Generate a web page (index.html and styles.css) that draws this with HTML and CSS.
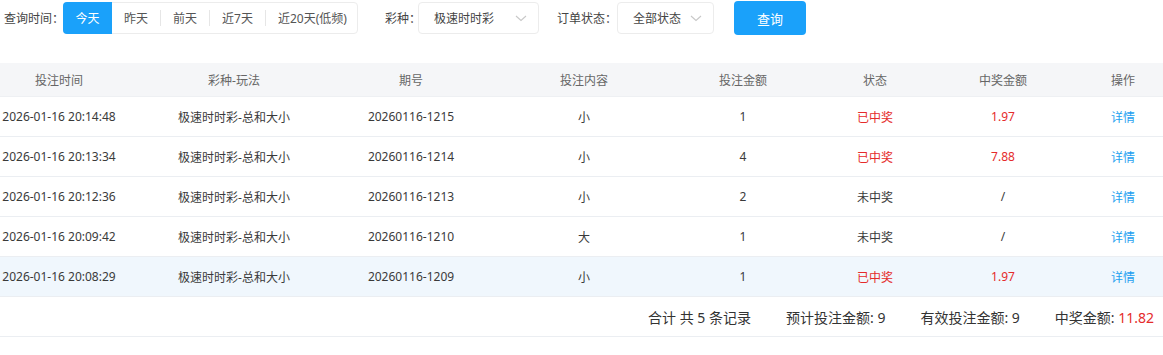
FILE: index.html
```html
<!DOCTYPE html>
<html lang="zh-CN">
<head>
<meta charset="utf-8">
<link rel="stylesheet" href="styles.css">
</head>
<body>
<div class="page">
  <div class="filters">
    <span class="label">查询时间：</span>
    <div class="seg">
      <span class="seg-item active">今天</span>
      <span class="seg-item">昨天</span>
      <span class="seg-sep"></span>
      <span class="seg-item">前天</span>
      <span class="seg-sep"></span>
      <span class="seg-item">近7天</span>
      <span class="seg-sep"></span>
      <span class="seg-item">近20天(低频)</span>
    </div>
    <span class="label label-lottery">彩种：</span>
    <div class="select select-lottery">
      <span>极速时时彩</span>
      <svg class="chev" width="12" height="7" viewBox="0 0 12 7"><path d="M1 1l5 4.5L11 1" fill="none" stroke="#c8c8c8" stroke-width="1.1"/></svg>
    </div>
    <span class="label label-status">订单状态：</span>
    <div class="select select-status">
      <span>全部状态</span>
      <svg class="chev" width="12" height="7" viewBox="0 0 12 7"><path d="M1 1l5 4.5L11 1" fill="none" stroke="#c8c8c8" stroke-width="1.1"/></svg>
    </div>
    <button class="btn-query">查询</button>
  </div>

  <div class="table">
    <div class="row head">
      <div>投注时间</div><div>彩种-玩法</div><div>期号</div><div>投注内容</div><div>投注金额</div><div>状态</div><div>中奖金额</div><div>操作</div>
    </div>
    <div class="row">
      <div>2026-01-16 20:14:48</div><div>极速时时彩-总和大小</div><div>20260116-1215</div><div>小</div><div>1</div><div class="red">已中奖</div><div class="red">1.97</div><div class="link">详情</div>
    </div>
    <div class="row">
      <div>2026-01-16 20:13:34</div><div>极速时时彩-总和大小</div><div>20260116-1214</div><div>小</div><div>4</div><div class="red">已中奖</div><div class="red">7.88</div><div class="link">详情</div>
    </div>
    <div class="row">
      <div>2026-01-16 20:12:36</div><div>极速时时彩-总和大小</div><div>20260116-1213</div><div>小</div><div>2</div><div>未中奖</div><div>/</div><div class="link">详情</div>
    </div>
    <div class="row">
      <div>2026-01-16 20:09:42</div><div>极速时时彩-总和大小</div><div>20260116-1210</div><div>大</div><div>1</div><div>未中奖</div><div>/</div><div class="link">详情</div>
    </div>
    <div class="row hover">
      <div>2026-01-16 20:08:29</div><div>极速时时彩-总和大小</div><div>20260116-1209</div><div>小</div><div>1</div><div class="red">已中奖</div><div class="red">1.97</div><div class="link">详情</div>
    </div>
    <div class="summary">
      <span>合计 共 5 条记录</span>
      <span>预计投注金额: 9</span>
      <span>有效投注金额: 9</span>
      <span>中奖金额: <em class="red">11.82</em></span>
    </div>
  </div>
</div>
</body>
</html>
```

FILE: styles.css
```css
html, body {
  margin: 0;
  padding: 0;
  background: #fff;
}
body {
  font-family: "Noto Sans", "Noto Sans CJK SC", sans-serif;
  color: #333;
  font-size: 12px;
}
.page {
  width: 1163px;
  overflow: hidden;
}
.filters {
  display: flex;
  align-items: center;
  height: 36px;
  padding-left: 4px;
}
.filters > * {
  flex-shrink: 0;
  white-space: nowrap;
}
.label {
  color: #444;
  font-size: 12px;
  width: 59px;
  overflow: visible;
}
.label-lottery {
  margin-left: 27px;
  width: 33px;
}
.label-status {
  margin-left: 18px;
  width: 60px;
}
.seg {
  display: flex;
  align-items: center;
  height: 32px;
  border: 1px solid #ececec;
  border-radius: 4px;
  box-sizing: border-box;
  width: 295px;
}
.seg-item {
  display: flex;
  align-items: center;
  justify-content: center;
  height: 100%;
  padding: 0 12px;
  color: #555;
  white-space: nowrap;
  flex-shrink: 0;
}
.seg-item.active {
  background: #1aa1fa;
  color: #fff;
  border-radius: 4px 0 0 4px;
  width: 49px;
  padding: 0;
  box-sizing: border-box;
  margin: -1px 0 -1px -1px;
  height: 32px;
}
.seg-sep {
  width: 1px;
  height: 16px;
  background: #e6e6e6;
  flex-shrink: 0;
}
.select {
  display: flex;
  align-items: center;
  justify-content: space-between;
  height: 32px;
  border: 1px solid #ececec;
  border-radius: 4px;
  box-sizing: border-box;
  padding: 0 11px 0 15px;
  color: #444;
}
.select-lottery { width: 121px; }
.select-status { width: 97px; }
.chev { display: block; }
.btn-query {
  margin-left: 20px;
  width: 72px;
  height: 34px;
  border: 0;
  border-radius: 4px;
  background: #1aa1fa;
  color: #fff;
  font-family: "Noto Sans CJK SC", sans-serif;
  font-size: 13px;
  padding: 0;
}
.table {
  margin-top: 27px;
}
.row {
  display: grid;
  grid-template-columns: 118px 232px 122px 224px 94px 170px 86px 154px;
  height: 40px;
  border-bottom: 1px solid #ebeef2;
  box-sizing: border-box;
  align-items: center;
  text-align: center;
  color: #3a3a3a;
}
.row > div {
  white-space: nowrap;
  display: flex;
  justify-content: center;
}
.row.head {
  height: 34px;
  background: #f5f6f8;
  color: #666;
  border-bottom: 1px solid #eef0f3;
}
.row.hover {
  background: #f0f7fd;
}
.red {
  color: #e52b2b;
  font-style: normal;
}
.link {
  color: #1d9ff0;
}
.summary {
  display: flex;
  justify-content: flex-end;
  align-items: center;
  gap: 35px;
  height: 40px;
  border-bottom: 1px solid #ebeef2;
  box-sizing: border-box;
  padding-right: 9px;
  font-size: 14px;
  color: #333;
}
```
